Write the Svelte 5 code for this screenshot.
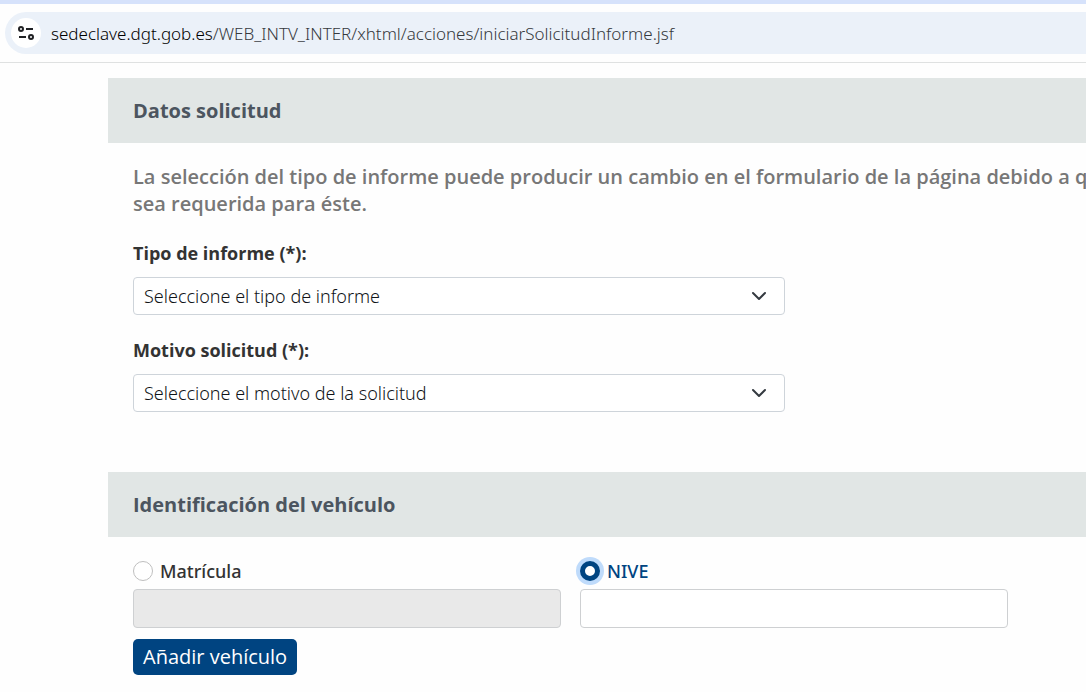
<script>
  const fields = [
    { id: 'tipo', label: 'Tipo de informe (*):', placeholder: 'Seleccione el tipo de informe' },
    { id: 'motivo', label: 'Motivo solicitud (*):', placeholder: 'Seleccione el motivo de la solicitud' }
  ]

  const host = 'sedeclave.dgt.gob.es'
  const path = '/WEB_INTV_INTER/xhtml/acciones/iniciarSolicitudInforme.jsf'

  let identificacion = 'nive'
  let matricula = ''
  let nive = ''
</script>

<header class="browser">
  <div class="address">
    <button class="site-info" type="button" aria-label="Información del sitio">
      <svg width="18" height="18" viewBox="0 0 18 18" fill="none" stroke="#202124" stroke-width="2">
        <circle cx="4" cy="5" r="2" />
        <path d="M9 5h7M2 13h7" />
        <circle cx="14" cy="13" r="2" />
      </svg>
    </button>
    <span class="url"><span class="host">{host}</span>{path}</span>
  </div>
</header>

<main>
  <section>
    <h2>Datos solicitud</h2>
    <div class="body">
      <p class="notice">
        La selección del tipo de informe puede producir un cambio en el formulario de la página debido a que<br />
        sea requerida para éste.
      </p>
      {#each fields as { id, label, placeholder }}
        <div class="field">
          <label for={id}>{label}</label>
          <div class="select">
            <select {id}>
              <option>{placeholder}</option>
            </select>
            <svg width="16" height="16" viewBox="0 0 16 16" fill="none" stroke="#343a40" stroke-width="2">
              <path d="M2 5l6 6 6-6" stroke-linecap="round" stroke-linejoin="round" />
            </svg>
          </div>
        </div>
      {/each}
    </div>
  </section>

  <section>
    <h2>Identificación del vehículo</h2>
    <div class="body vehicle">
      <div class="options">
        <div class="option">
          <label>
            <input type="radio" name="identificacion" value="matricula" bind:group={identificacion} />
            Matrícula
          </label>
          <input type="text" aria-label="Matrícula" bind:value={matricula} disabled={identificacion !== 'matricula'} />
        </div>
        <div class="option">
          <label class:active={identificacion === 'nive'}>
            <input type="radio" name="identificacion" value="nive" bind:group={identificacion} />
            NIVE
          </label>
          <input type="text" aria-label="NIVE" bind:value={nive} disabled={identificacion !== 'nive'} />
        </div>
      </div>
      <button class="add" type="button">Añadir vehículo</button>
    </div>
  </section>
</main>

<style>
:global(body) {
  background: #fefefe;
  color: #333;
  font-family: "Open Sans", "Noto Sans", sans-serif;
  font-size: 18px;
  overflow: hidden;
}

.browser {
  border-top: 4px solid #d6e2fb;
  border-bottom: 1px solid #dfe1e1;
  padding: 8px 0 8px 5px;
  background: #fefefe;
}
.address {
  display: flex;
  align-items: center;
  gap: 10px;
  height: 42px;
  padding-left: 6px;
  border-radius: 21px 0 0 21px;
  background: #ebf1f9;
}
.site-info {
  display: flex;
  align-items: center;
  justify-content: center;
  width: 30px;
  height: 30px;
  padding: 0;
  border: 0;
  border-radius: 50%;
  background: #fff;
}
.url {
  color: #36393d;
  font-family: "Noto Sans", "Open Sans", sans-serif;
  font-size: 17px;
  font-weight: 300;
  white-space: nowrap;
}
.host {
  color: #000;
}

main {
  margin: 15px 0 0 108px;
}
h2 {
  margin: 0;
  padding: 0 25px;
  background: #e1e6e5;
  color: #4c555f;
  font-size: 20px;
  font-weight: 700;
  line-height: 65px;
}
.body {
  padding: 20px 0 60px 25px;
}
.notice {
  margin: 0 0 22px;
  color: #777;
  font-size: 20px;
  font-weight: 600;
  line-height: 27px;
  white-space: nowrap;
}
.field + .field {
  margin-top: 21px;
}
.field label {
  display: block;
  margin-bottom: 10px;
  font-weight: 700;
  line-height: 28px;
}
.select {
  display: grid;
  width: 70%;
  max-width: 652px;
  align-items: center;
}
.select select,
.select svg {
  grid-area: 1 / 1;
}
.select svg {
  justify-self: end;
  margin-right: 18px;
  pointer-events: none;
}
select {
  appearance: none;
  width: 100%;
  height: 38px;
  padding: 0 40px 0 10px;
  border: 1px solid #ced4da;
  border-radius: 4px;
  background: #fff;
  color: #101418;
  font-family: "Noto Sans", "Open Sans", sans-serif;
  font-size: 18px;
  font-weight: 300;
}

.vehicle {
  padding: 20px 0 0 25px;
}
.options {
  display: grid;
  grid-template-columns: 1fr 1fr;
  gap: 19px;
  width: 92%;
  max-width: 875px;
}
.option label {
  display: flex;
  align-items: center;
  gap: 7px;
  height: 28px;
  margin-bottom: 4px;
  font-family: "Noto Sans", "Open Sans", sans-serif;
  font-weight: 500;
}
.option label.active {
  color: #004481;
}
input[type="radio"] {
  appearance: none;
  width: 20px;
  height: 20px;
  margin: 0;
  border: 1px solid #bfbfbf;
  border-radius: 50%;
  background: #fff;
}
input[type="radio"]:checked {
  border: 5px solid #004481;
  box-shadow: 0 0 0 4px #bfdbfb;
}
input[type="text"] {
  display: block;
  box-sizing: border-box;
  width: 100%;
  height: 39px;
  padding: 0 10px;
  border: 1px solid #ced0d2;
  border-radius: 4px;
  background: #fff;
  font: inherit;
}
input[type="text"]:disabled {
  background: #e9e9e9;
}
.add {
  height: 36px;
  margin-top: 11px;
  padding: 0 10px 2px;
  border: 0;
  border-radius: 5px;
  background: #004481;
  color: #fff;
  font: inherit;
  font-size: 20px;
}
</style>
